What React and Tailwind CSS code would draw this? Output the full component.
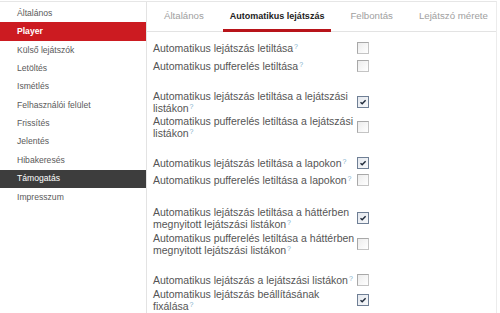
const menu = [
  "Általános",
  "Player",
  "Külső lejátszók",
  "Letöltés",
  "Ismétlés",
  "Felhasználói felület",
  "Frissítés",
  "Jelentés",
  "Hibakeresés",
  "Támogatás",
  "Impresszum",
];

const tabs = ["Általános", "Automatikus lejátszás", "Felbontás", "Lejátszó mérete"];

// mt = gap above the row, in px
const rows = [
  { text: "Automatikus lejátszás letiltása", checked: false, mt: "mt-[10px]" },
  { text: "Automatikus pufferelés letiltása", checked: false, mt: "mt-[6px]" },
  { text: "Automatikus lejátszás letiltása a lejátszási listákon", checked: true, mt: "mt-[18px]" },
  { text: "Automatikus pufferelés letiltása a lejátszási listákon", checked: false, mt: "mt-[1px]" },
  { text: "Automatikus lejátszás letiltása a lapokon", checked: true, mt: "mt-[18px]" },
  { text: "Automatikus pufferelés letiltása a lapokon", checked: false, mt: "mt-[5px]" },
  { text: "Automatikus lejátszás letiltása a háttérben megnyitott lejátszási listákon", checked: true, mt: "mt-[20px]" },
  { text: "Automatikus pufferelés letiltása a háttérben megnyitott lejátszási listákon", checked: false, mt: "mt-[2px]" },
  { text: "Automatikus lejátszás a lejátszási listákon", checked: false, mt: "mt-[18px]" },
  { text: "Automatikus lejátszás beállításának fixálása", checked: true, mt: "mt-[2px]" },
];

const Checkbox = ({ checked }) =>
  checked ? (
    <div className="w-[12px] h-[12px] shrink-0 border border-[#6f7f95] bg-gradient-to-br from-[#e4e8ee] to-[#f7f8fa] flex items-center justify-center">
      <svg width="8" height="8" viewBox="0 0 8 8">
        <path d="M1.5 4.2 L3.2 5.8 L6.6 2.2" fill="none" stroke="#1f2a3a" strokeWidth="1.4" />
      </svg>
    </div>
  ) : (
    <div className="w-[12px] h-[12px] shrink-0 border border-[#c4c4c4] border-t-[#a8a8a8] border-l-[#a8a8a8] bg-gradient-to-br from-[#ececec] to-white" />
  );

export default function App() {
  return (
    <div
      className="w-[500px] h-[313px] bg-white overflow-hidden pt-[1px]"
      style={{ fontFamily: '"Liberation Sans", Arial, sans-serif' }}
    >
      <div className="h-full flex border-t border-[#e6e6e6] border-r border-r-[#ececec] mr-[3px]">
        <aside className="w-[147px] shrink-0 border-r border-[#e3e3e3] pt-[2px]">
          {menu.map((item) => (
            <div
              key={item}
              className={
                item === "Player"
                  ? "h-[18.4px] flex items-center pl-[17px] text-[8.6px] font-bold text-white bg-[#cc1b21]"
                  : item === "Támogatás"
                  ? "h-[18.4px] flex items-center pl-[17px] text-[8.6px] text-white bg-[#3d3d3d]"
                  : "h-[18.4px] flex items-center pl-[17px] text-[8.6px] text-[#5a5a5a]"
              }
            >
              {item}
            </div>
          ))}
        </aside>

        <main className="flex-1 min-w-0">
          <div className="h-[30px] border-b border-[#e3e3e3] flex items-stretch pl-[4px]">
            {tabs.map((t) => (
              <div
                key={t}
                className={
                  t === "Automatikus lejátszás"
                    ? "relative whitespace-nowrap px-[7px] mx-[6px] flex items-center text-[9px] font-bold text-[#222]"
                    : "relative whitespace-nowrap px-[7px] mx-[6px] flex items-center text-[9.7px] text-[#a0a0a0]"
                }
              >
                {t}
                {t === "Automatikus lejátszás" && (
                  <div className="absolute left-0 right-0 bottom-[-1px] h-[3px] bg-[#b8141a]" />
                )}
              </div>
            ))}
          </div>

          <div className="pl-[6px] flex flex-col">
            {rows.map((r) => (
              <div key={r.text} className={`flex items-center ${r.mt}`}>
                <div className="w-[204px] text-[10.5px] leading-[12px] text-[#555]">
                  {r.text}
                  <sup className="relative top-[-3px] text-[7px] leading-none text-[#7fb0cc] ml-[1px]">?</sup>
                </div>
                <Checkbox checked={r.checked} />
              </div>
            ))}
          </div>
        </main>
      </div>
    </div>
  );
}
